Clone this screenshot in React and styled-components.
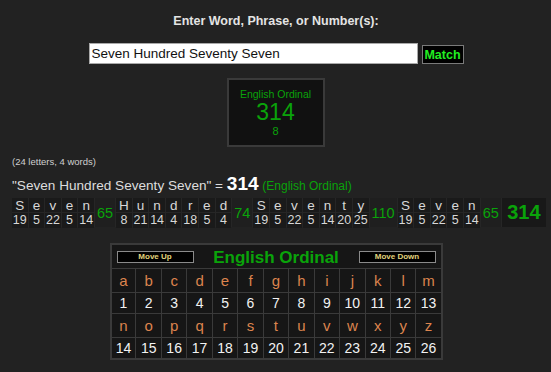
import styled, { createGlobalStyle } from "styled-components";

const GlobalStyle = createGlobalStyle`
  body {
    margin: 0;
    background: #222222;
    font-family: "Liberation Sans", Arial, sans-serif;
  }
`;

const words = [
  { letters: ["S", "e", "v", "e", "n"], values: [19, 5, 22, 5, 14], sum: 65 },
  {
    letters: ["H", "u", "n", "d", "r", "e", "d"],
    values: [8, 21, 14, 4, 18, 5, 4],
    sum: 74,
  },
  {
    letters: ["S", "e", "v", "e", "n", "t", "y"],
    values: [19, 5, 22, 5, 14, 20, 25],
    sum: 110,
  },
  { letters: ["S", "e", "v", "e", "n"], values: [19, 5, 22, 5, 14], sum: 65 },
];

const alphabet = "abcdefghijklmnopqrstuvwxyz".split("");

const App = () => {
  return (
    <Page>
      <GlobalStyle />
      <Title>Enter Word, Phrase, or Number(s):</Title>

      <SearchRow>
        <PhraseInput readOnly value="Seven Hundred Seventy Seven" />
        <MatchButton>Match</MatchButton>
      </SearchRow>

      <ResultBox>
        <div className="cipher">English Ordinal</div>
        <div className="value">314</div>
        <div className="reduced">8</div>
      </ResultBox>

      <Details>
        <Counts>(24 letters, 4 words)</Counts>
        <Summary>
          "Seven Hundred Seventy Seven" = <strong>314</strong>{" "}
          <span>(English Ordinal)</span>
        </Summary>

        <Breakdown>
          {words.map((word, w) => (
            <WordGroup key={w}>
              {word.letters.map((letter, i) => (
                <LetterColumn key={i}>
                  <div className="letter">{letter}</div>
                  <div className="value">{word.values[i]}</div>
                </LetterColumn>
              ))}
              <WordSum>{word.sum}</WordSum>
            </WordGroup>
          ))}
          <Total>314</Total>
        </Breakdown>
      </Details>

      <CipherTable>
        <tbody>
          <tr>
            <HeaderCell colSpan={13}>
              <HeaderBar>
                <MoveButton>Move Up</MoveButton>
                <CipherName>English Ordinal</CipherName>
                <MoveButton>Move Down</MoveButton>
              </HeaderBar>
            </HeaderCell>
          </tr>
          {[0, 13].map((start) => (
            <CipherRows key={start} start={start} />
          ))}
        </tbody>
      </CipherTable>
    </Page>
  );
};

const CipherRows = ({ start }) => {
  const chunk = alphabet.slice(start, start + 13);
  return (
    <>
      <tr>
        {chunk.map((l) => (
          <LetterCell key={l}>{l}</LetterCell>
        ))}
      </tr>
      <tr>
        {chunk.map((l, i) => (
          <NumberCell key={l}>{start + i + 1}</NumberCell>
        ))}
      </tr>
    </>
  );
};

export default App;

const Page = styled.div`
  width: 551px;
  padding-top: 14px;
  display: flex;
  flex-direction: column;
  align-items: center;
`;

const Title = styled.div`
  font-size: 12.5px;
  line-height: 15px;
  font-weight: bold;
  color: #e4e4e4;
  padding-left: 1px;
`;

const SearchRow = styled.div`
  display: flex;
  align-items: center;
  gap: 4px;
  margin-top: 14px;
  padding-left: 1px;
`;

const PhraseInput = styled.input`
  box-sizing: border-box;
  width: 329px;
  height: 21px;
  margin: 0;
  padding: 0 2px;
  border: 1px solid #a9a9a9;
  background: #ffffff;
  color: #111111;
  font-family: "Liberation Sans", Arial, sans-serif;
  font-size: 13.5px;
  outline: none;
`;

const MatchButton = styled.button`
  box-sizing: border-box;
  height: 19px;
  width: 42px;
  margin-top: 2px;
  padding: 0;
  background: #000000;
  border: 1px solid #7a7a7a;
  color: #22ee22;
  font-family: "Liberation Sans", Arial, sans-serif;
  font-size: 12.5px;
  font-weight: bold;
`;

const ResultBox = styled.div`
  box-sizing: border-box;
  width: 98px;
  height: 69px;
  margin-top: 14px;
  border: 2px solid #3a3a3a;
  background: #111111;
  display: flex;
  flex-direction: column;
  align-items: center;
  padding-top: 8px;
  color: #0aa30a;

  .cipher {
    font-size: 10.5px;
    line-height: 12px;
  }

  .value {
    font-size: 23px;
    line-height: 25px;
  }

  .reduced {
    font-size: 11px;
    line-height: 12px;
  }
`;

const Details = styled.div`
  align-self: stretch;
  padding-left: 12px;
`;

const Counts = styled.div`
  margin-top: 9px;
  font-size: 9.5px;
  line-height: 12px;
  color: #cfcfcf;
`;

const Summary = styled.div`
  margin-top: 6px;
  font-size: 13.6px;
  line-height: 19px;
  color: #dddddd;

  strong {
    font-size: 19px;
    color: #ffffff;
  }

  span {
    font-size: 12px;
    color: #0aa30a;
  }
`;

const Breakdown = styled.div`
  display: flex;
  margin-top: 2px;
  height: 29px;
  width: 534px;
  background: #1d1d1d;
`;

const WordGroup = styled.div`
  display: flex;
`;

const LetterColumn = styled.div`
  box-sizing: border-box;
  width: 16.6px;
  display: flex;
  flex-direction: column;
  border-right: 1px solid #262626;
  text-align: center;
  color: #d8d8d8;

  .letter {
    height: 14px;
    line-height: 15px;
    font-size: 13.5px;
    background: #1a1a1a;
    border-bottom: 1px solid #262626;
  }

  .value {
    flex: 1;
    line-height: 15px;
    font-size: 12.5px;
    background: #1a1a1a;
  }
`;

const WordSum = styled.div`
  display: flex;
  align-items: center;
  padding: 0 2px;
  font-size: 14.5px;
  color: #0aa30a;
  background: #1f1f1f;
  border-right: 1px solid #262626;
`;

const Total = styled.div`
  flex: 1;
  display: flex;
  align-items: center;
  justify-content: center;
  font-size: 20px;
  font-weight: bold;
  color: #0aa30a;
  background: #181818;
`;

const CipherTable = styled.table`
  margin-top: 16px;
  margin-left: 1px;
  width: 333px;
  border-collapse: collapse;
  border: 2px solid #3a3a3a;
  background: #161616;
  table-layout: fixed;
`;

const HeaderCell = styled.td`
  height: 23px;
  padding: 0;
  border: 1px solid #3a3a3a;
`;

const HeaderBar = styled.div`
  display: flex;
  align-items: center;
  justify-content: space-between;
  padding: 0 5px;
`;

const MoveButton = styled.div`
  box-sizing: border-box;
  width: 77px;
  height: 12px;
  background: #000000;
  border: 1px solid #8a8a8a;
  color: #e2d47c;
  font-family: "Liberation Sans", Arial, sans-serif;
  font-size: 8px;
  font-weight: bold;
  line-height: 10px;
  text-align: center;
`;

const CipherName = styled.div`
  font-size: 17px;
  font-weight: bold;
  color: #0aa30a;
  margin-top: 2px;
`;

const LetterCell = styled.td`
  height: 23px;
  padding: 0;
  border: 1px solid #3a3a3a;
  text-align: center;
  font-size: 15px;
  color: #dc844e;
`;

const NumberCell = styled.td`
  height: 20px;
  padding: 0;
  border: 1px solid #3a3a3a;
  text-align: center;
  font-size: 14px;
  color: #f2f2f2;
`;
